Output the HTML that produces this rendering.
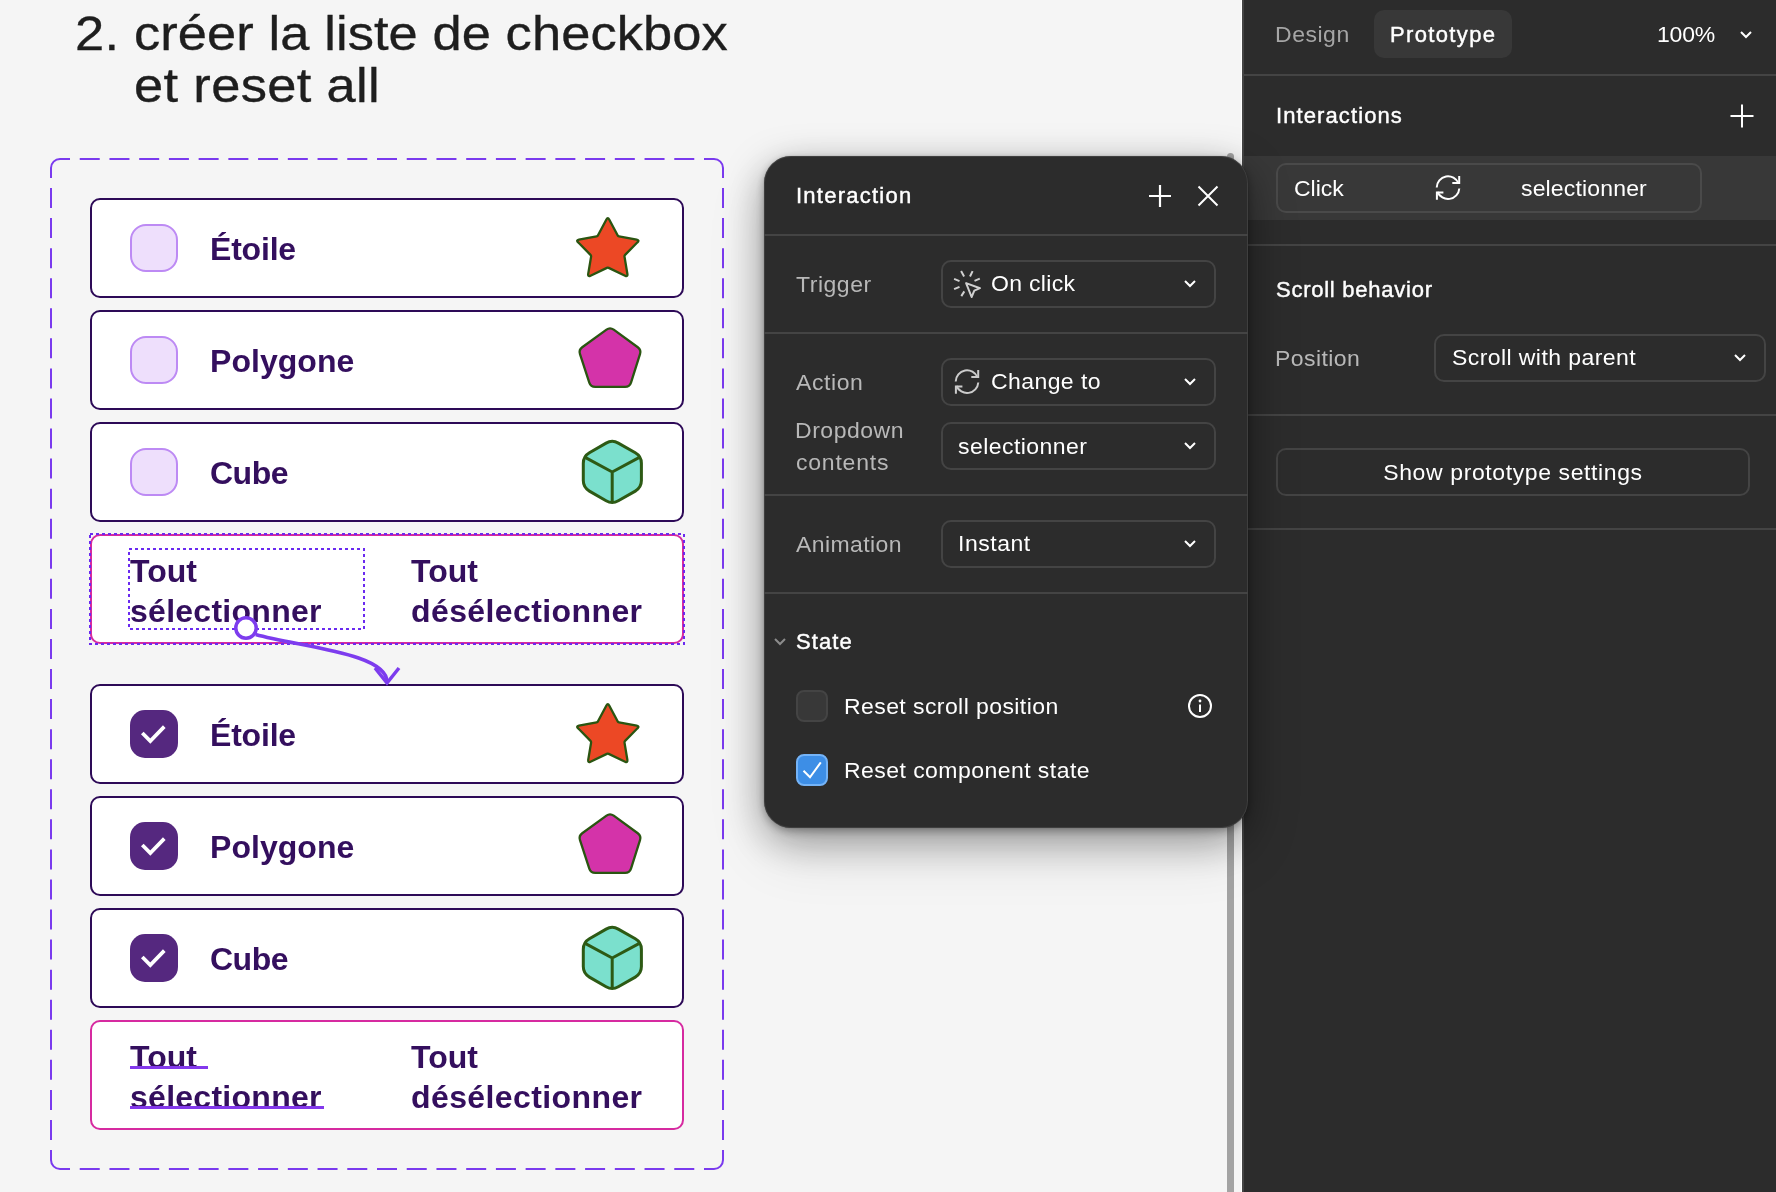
<!DOCTYPE html>
<html><head><meta charset="utf-8">
<style>
*{box-sizing:border-box;margin:0;padding:0}
html,body{width:1776px;height:1192px;overflow:hidden;background:#f5f5f5;font-family:"Liberation Sans",sans-serif;}
.abs{position:absolute}
.tx,.title,.lbl,.t{will-change:transform}
#canvas{position:absolute;left:0;top:0;width:1242px;height:1192px;background:#f5f5f5;overflow:hidden;border-right:1px solid #fff}
.title{position:absolute;left:76px;top:7px;font-size:49px;line-height:52px;color:#1e1e1e;white-space:nowrap;-webkit-text-stroke:0.35px #1e1e1e}
.title span{transform:scaleX(1.07);transform-origin:0 0;will-change:transform}
.card{position:absolute;left:90px;width:594px;height:100px;border:2px solid #2d0a57;border-radius:10px;background:#fff}
.card .lbl{position:absolute;left:118px;top:29px;font-size:32px;line-height:40px;font-weight:bold;color:#340f5e;white-space:nowrap;letter-spacing:-0.2px}
#l2,#l5{letter-spacing:0.05px}#l3,#l6{letter-spacing:-0.5px}#b2,#b6{letter-spacing:0.27px}#b4,#b8{letter-spacing:0.4px}
.cb{position:absolute;left:38px;top:24px;width:48px;height:48px;border-radius:16px;background:#eedffc;border:2px solid #bd8af4}
.cb.on{background:#55287f;border:none;border-radius:15px}
.btns{position:absolute;left:90px;width:594px;height:110px;border:2px solid #d62aa0;border-radius:10px;background:#fff}
.btns .t{position:absolute;top:15px;font-size:32px;line-height:40px;font-weight:bold;color:#340f5e;white-space:nowrap}
svg{position:absolute;overflow:visible}
</style></head><body>
<div id="canvas">
<div class="title"><span id="t0" style="position:absolute;left:-1px;top:0;letter-spacing:0.3px">2.</span><span id="t1" style="position:absolute;left:58px;top:0;letter-spacing:0.08px">créer la liste de checkbox</span><span id="t2" style="position:absolute;left:58px;top:52px;letter-spacing:0.33px">et reset all</span></div>
<svg style="left:0;top:0" width="1242" height="1192"><path d="M79.73 159h20M109.45 159h20M139.18 159h20M168.91 159h20M198.64 159h20M228.36 159h20M258.09 159h20M287.82 159h20M317.55 159h20M347.27 159h20M377.00 159h20M406.73 159h20M436.45 159h20M466.18 159h20M495.91 159h20M525.64 159h20M555.36 159h20M585.09 159h20M614.82 159h20M644.55 159h20M674.27 159h20M79.73 1169h20M109.45 1169h20M139.18 1169h20M168.91 1169h20M198.64 1169h20M228.36 1169h20M258.09 1169h20M287.82 1169h20M317.55 1169h20M347.27 1169h20M377.00 1169h20M406.73 1169h20M436.45 1169h20M466.18 1169h20M495.91 1169h20M525.64 1169h20M555.36 1169h20M585.09 1169h20M614.82 1169h20M644.55 1169h20M674.27 1169h20M51 188.06v20M51 218.12v20M51 248.18v20M51 278.24v20M51 308.30v20M51 338.36v20M51 368.42v20M51 398.48v20M51 428.55v20M51 458.61v20M51 488.67v20M51 518.73v20M51 548.79v20M51 578.85v20M51 608.91v20M51 638.97v20M51 669.03v20M51 699.09v20M51 729.15v20M51 759.21v20M51 789.27v20M51 819.33v20M51 849.39v20M51 879.45v20M51 909.52v20M51 939.58v20M51 969.64v20M51 999.70v20M51 1029.76v20M51 1059.82v20M51 1089.88v20M51 1119.94v20M723 188.06v20M723 218.12v20M723 248.18v20M723 278.24v20M723 308.30v20M723 338.36v20M723 368.42v20M723 398.48v20M723 428.55v20M723 458.61v20M723 488.67v20M723 518.73v20M723 548.79v20M723 578.85v20M723 608.91v20M723 638.97v20M723 669.03v20M723 699.09v20M723 729.15v20M723 759.21v20M723 789.27v20M723 819.33v20M723 849.39v20M723 879.45v20M723 909.52v20M723 939.58v20M723 969.64v20M723 999.70v20M723 1029.76v20M723 1059.82v20M723 1089.88v20M723 1119.94v20M51 178V168A9 9 0 0 1 60 159H70M704 159H714A9 9 0 0 1 723 168V178M723 1150V1160A9 9 0 0 1 714 1169H704M70 1169H60A9 9 0 0 1 51 1160V1150" fill="none" stroke="#7a3aee" stroke-width="2"/></svg>
<svg style="left:0;top:0" width="0" height="0"><defs>
<path id="star" d="M606.4 21.5Q607.8 18.8 609.2 21.5L617.6 37.3Q618.0 38.2 619.0 38.3L636.7 41.6Q639.7 42.2 637.5 44.3L625.1 56.9Q624.4 57.6 624.5 58.6L627.4 76.0Q627.8 79.0 625.1 77.7L608.7 69.9Q607.8 69.5 606.9 69.9L590.5 77.7Q587.8 79.0 588.2 76.0L591.1 58.6Q591.2 57.6 590.5 56.9L578.1 44.3Q575.9 42.2 578.9 41.6L596.6 38.3Q597.6 38.2 598.0 37.3Z" fill="#ec4825" stroke="#2a5511" stroke-width="2.3" stroke-linejoin="round"/>
<path id="pent" d="M606.5 19.6Q610.1 17.0 613.7 19.7L637.8 37.2Q641.4 39.9 640.0 44.2L631.0 72.6Q629.6 76.9 625.1 76.9L595.2 76.9Q590.7 76.9 589.3 72.6L580.0 44.2Q578.6 39.9 582.2 37.3Z" fill="#d433a9" stroke="#2a5511" stroke-width="2.3" stroke-linejoin="round"/>
<g id="cube"><path d="M606.1 21.1Q612.2 17.6 618.3 21.1L635.3 30.8Q641.4 34.3 641.4 41.3L641.4 58.6Q641.4 65.6 635.3 69.1L618.3 78.8Q612.2 82.3 606.1 78.8L589.4 69.1Q583.3 65.6 583.3 58.6L583.3 41.3Q583.3 34.3 589.4 30.8Z" fill="#7be0cd" stroke="#2d5a14" stroke-width="3" stroke-linejoin="round"/><path d="M585.6 35.6L612.2 50L638.9 35.6M612.2 50V80.5" fill="none" stroke="#2d5a14" stroke-width="3" stroke-linejoin="round"/></g>
<path id="chk" d="M142.3 33L150.3 41L164.3 26.6" fill="none" stroke="#fff" stroke-width="3.7"/>
</defs></svg>
<div class="card" style="top:198px"><div class="cb"></div><div class="lbl" id="l1">Étoile</div></div>
<div class="card" style="top:310px"><div class="cb"></div><div class="lbl" id="l2">Polygone</div></div>
<div class="card" style="top:422px"><div class="cb"></div><div class="lbl" id="l3">Cube</div></div>
<div class="btns" style="top:534px"><div class="t" id="b1" style="left:38px">Tout</div><div class="t" id="b2" style="left:38px;top:55px">sélectionner</div><div class="t" id="b3" style="left:319px">Tout</div><div class="t" id="b4" style="left:319px;top:55px">désélectionner</div></div>
<div class="card" style="top:684px"><div class="cb on"></div><div class="lbl" id="l4">Étoile</div></div>
<div class="card" style="top:796px"><div class="cb on"></div><div class="lbl" id="l5">Polygone</div></div>
<div class="card" style="top:908px"><div class="cb on"></div><div class="lbl" id="l6">Cube</div></div>
<div class="btns" style="top:1020px"><div class="t" id="b5" style="left:38px">Tout</div><div class="t" id="b6" style="left:38px;top:55px">sélectionner</div><div class="t" id="b7" style="left:319px">Tout</div><div class="t" id="b8" style="left:319px;top:55px">désélectionner</div>
<div class="abs" style="left:38px;top:44px;width:78px;height:3px;background:#8338ec"></div><div class="abs" style="left:38px;top:84px;width:194px;height:3px;background:#8338ec"></div></div>
<svg style="left:0;top:0" width="1242" height="1192">
<use href="#star" y="198"/><use href="#pent" y="310"/><use href="#cube" y="422"/>
<use href="#star" y="684"/><use href="#pent" y="796"/><use href="#cube" y="908"/>
<use href="#chk" y="700"/><use href="#chk" y="812"/><use href="#chk" y="924"/>
<rect x="90" y="534" width="594" height="110" fill="none" stroke="#6a2af0" stroke-width="2" stroke-dasharray="3 3"/>
<rect x="129" y="549" width="235" height="80" fill="none" stroke="#6a2af0" stroke-width="2" stroke-dasharray="3 3"/>
<path d="M255.7 634.5C300 647 387 653 387 682" fill="none" stroke="#7d3cee" stroke-width="3.5"/>
<path d="M375 668L387 683L399 668" fill="none" stroke="#7d3cee" stroke-width="3.5"/>
<circle cx="246" cy="628" r="10.2" fill="#fff" stroke="#7d3cee" stroke-width="3.5"/>
</svg>

</div>
<div id="side" class="abs" style="left:1242px;top:0;width:534px;height:1192px;background:#2c2c2c;border-left:2px solid #444;color:#fff;font-size:23px">
<style>
#side .sep{position:absolute;left:0;right:0;height:2px;background:#444}
#side .box{position:absolute;border:2px solid #444;border-radius:10px}
</style>
<div class="tx" id="s1" style="left:31px;top:21px;color:#a6a6a6;letter-spacing:0.5px">Design</div>
<div class="abs" style="left:130px;top:10px;width:138px;height:48px;background:#383838;border-radius:10px"></div>
<div class="tx md" id="s2" style="left:145.5px;top:22px;letter-spacing:1.35px">Prototype</div>
<div class="tx" id="s3" style="left:413px;top:21px;letter-spacing:-0.2px">100%</div>
<svg style="left:495px;top:30px" width="14" height="10"><path d="M2 2L7 7L12 2" fill="none" stroke="#fff" stroke-width="2"/></svg>
<div class="sep" style="top:74px"></div>
<div class="tx md" id="s4" style="left:31.5px;top:103px;letter-spacing:1.1px">Interactions</div>
<svg style="left:486px;top:104px" width="24" height="24"><path d="M12 0.5V23.5M0.5 12H23.5" fill="none" stroke="#fff" stroke-width="2"/></svg>
<div class="abs" style="left:0;top:156px;width:532px;height:64px;background:#383838"></div>
<div class="box" style="left:32px;top:163px;width:426px;height:50px;border-color:#4a4a4a"></div>
<div class="tx" id="s5" style="left:50px;top:175px;letter-spacing:0px">Click</div>
<svg style="left:190px;top:174px" width="28" height="28" viewBox="0 0 28 28"><g fill="none" stroke="#fff" stroke-width="2"><path d="M2.7 13.4A11.3 11.3 0 0 1 24.5 9.4M25.3 14.5A11.3 11.3 0 0 1 3.5 17.8"/><path d="M25.2 2V9.1H18.3M2.9 25.7V18.5H9.4"/></g></svg>
<div class="tx" id="s6" style="left:277.4px;top:175px;letter-spacing:0.15px">selectionner</div>
<div class="sep" style="top:244px"></div>
<div class="tx md" id="s7" style="left:31.5px;top:277px;letter-spacing:0.75px">Scroll behavior</div>
<div class="tx" id="s8" style="left:31.4px;top:345px;color:#b8b8b8;letter-spacing:0.4px">Position</div>
<div class="box" style="left:190px;top:334px;width:332px;height:48px"></div>
<div class="tx" id="s9" style="left:208px;top:344px;letter-spacing:0.4px">Scroll with parent</div>
<svg style="left:489px;top:353px" width="14" height="10"><path d="M2 2L7 7L12 2" fill="none" stroke="#fff" stroke-width="2"/></svg>
<div class="sep" style="top:414px"></div>
<div class="box" style="left:32px;top:448px;width:474px;height:48px"></div>
<div class="tx" id="s10" style="left:32px;width:474px;text-align:center;transform-origin:50% 0;top:459px;letter-spacing:0.58px">Show prototype settings</div>
<div class="sep" style="top:528px"></div>
</div>

<div class="abs" style="left:1227px;top:153px;width:7px;height:1100px;background:#a3a3a3;border-radius:4px"></div>
<div id="pn" class="abs" style="left:764px;top:156px;width:484px;height:672px;background:#2c2c2c;border-radius:27px;color:#fff;font-size:23px;box-shadow:inset 0 0 0 1px rgba(255,255,255,0.09),0 0 1px rgba(0,0,0,.4),0 3px 8px rgba(0,0,0,.3),0 12px 40px rgba(0,0,0,.35),0 24px 60px rgba(0,0,0,.12);overflow:hidden">
<style>
#pn .sep{position:absolute;left:0;right:0;height:2px;background:#444}
.tx{position:absolute;white-space:nowrap;line-height:26px;font-size:22px;transform:scaleX(1.0455);transform-origin:0 0;margin-top:1px}
.md{-webkit-text-stroke:0.42px #fff;font-size:22px;transform:none;margin-top:0}
#pn .lab{color:#b8b8b8}
#pn .box{position:absolute;left:177px;width:275px;height:48px;border:2px solid #444;border-radius:10px}
</style>
<div class="tx md" id="p1" style="left:32px;top:27px;letter-spacing:1.25px">Interaction</div>
<svg style="left:385px;top:29px" width="22" height="22"><path d="M11 0V22M0 11H22" fill="none" stroke="#fff" stroke-width="2.2"/></svg>
<svg style="left:434px;top:30px" width="20" height="20"><path d="M0.5 0.5L19.5 19.5M19.5 0.5L0.5 19.5" fill="none" stroke="#fff" stroke-width="2"/></svg>
<div class="sep" style="top:78px"></div>
<div class="tx lab" id="p2" style="left:32px;top:115px;letter-spacing:0.5px">Trigger</div>
<div class="box" style="top:104px"></div>
<svg style="left:189px;top:114px" width="30" height="30" viewBox="0 0 30 30"><g fill="none" stroke="#d0d0d0" stroke-width="2" stroke-linecap="round"><path stroke-linecap="butt" d="M8.1 1.1L11.1 6.4M19.6 1.1L17 6.5M1.1 8.8L6.5 11.1M26.8 8.6L21.5 10.9M1.1 19.2L6.5 16.8M8.3 26.1L11.3 21.4"/><path d="M13.1 13.1L27 18.2L21.3 20.7L18.6 27Z" stroke-linejoin="round"/></g></svg>
<div class="tx" id="p3" style="left:226.5px;top:114px;letter-spacing:0.3px">On click</div>
<svg style="left:419px;top:123px" width="14" height="10"><path d="M2 2L7 7L12 2" fill="none" stroke="#fff" stroke-width="2"/></svg>
<div class="sep" style="top:176px"></div>
<div class="tx lab" id="p4" style="left:32px;top:213px;letter-spacing:0.55px">Action</div>
<div class="box" style="top:202px"></div>
<svg style="left:189px;top:212px" width="28" height="28" viewBox="0 0 28 28"><g fill="none" stroke="#ccc" stroke-width="2"><path d="M2.7 13.4A11.3 11.3 0 0 1 24.5 9.4M25.3 14.5A11.3 11.3 0 0 1 3.5 17.8"/><path d="M25.2 2V9.1H18.3M2.9 25.7V18.5H9.4"/></g></svg>
<div class="tx" id="p5" style="left:227px;top:212px;letter-spacing:0.4px">Change to</div>
<svg style="left:419px;top:221px" width="14" height="10"><path d="M2 2L7 7L12 2" fill="none" stroke="#fff" stroke-width="2"/></svg>
<div class="tx lab" id="p6" style="left:31.4px;top:261px;letter-spacing:0.5px">Dropdown</div>
<div class="tx lab" id="p7" style="left:32px;top:293px;letter-spacing:0.75px">contents</div>
<div class="box" style="top:266px"></div>
<div class="tx" id="p8" style="left:194px;top:277px;letter-spacing:0.42px">selectionner</div>
<svg style="left:419px;top:285px" width="14" height="10"><path d="M2 2L7 7L12 2" fill="none" stroke="#fff" stroke-width="2"/></svg>
<div class="sep" style="top:338px"></div>
<div class="tx lab" id="p9" style="left:32px;top:375px;letter-spacing:0.4px">Animation</div>
<div class="box" style="top:364px"></div>
<div class="tx" id="p10" style="left:194px;top:374px;letter-spacing:0.5px">Instant</div>
<svg style="left:419px;top:383px" width="14" height="10"><path d="M2 2L7 7L12 2" fill="none" stroke="#fff" stroke-width="2"/></svg>
<div class="sep" style="top:436px"></div>
<svg style="left:9px;top:481px" width="14" height="10"><path d="M2 2L7 7L12 2" fill="none" stroke="#8c8c8c" stroke-width="2"/></svg>
<div class="tx md" id="p11" style="left:31.5px;top:473px;letter-spacing:1.1px">State</div>
<div class="abs" style="left:32px;top:534px;width:32px;height:32px;border-radius:8px;background:#383838;border:2px solid #444"></div>
<div class="tx" id="p12" style="left:80px;top:537px;letter-spacing:0.4px">Reset scroll position</div>
<svg style="left:423px;top:537px" width="26" height="26" viewBox="0 0 26 26"><circle cx="13" cy="13" r="11" fill="none" stroke="#fff" stroke-width="2"/><path d="M13 11.5V19" stroke="#fff" stroke-width="2"/><circle cx="13" cy="8" r="1.4" fill="#fff"/></svg>
<div class="abs" style="left:32px;top:598px;width:32px;height:32px;border-radius:8px;background:#3d8ee6;border:2px solid #74b3f7"></div>
<svg style="left:32px;top:598px" width="32" height="32"><path d="M7.5 16.8L14 23.3L24.8 8.3" fill="none" stroke="#fff" stroke-width="2"/></svg>
<div class="tx" id="p13" style="left:80px;top:601px;letter-spacing:0.43px">Reset component state</div>
</div>

</body></html>
